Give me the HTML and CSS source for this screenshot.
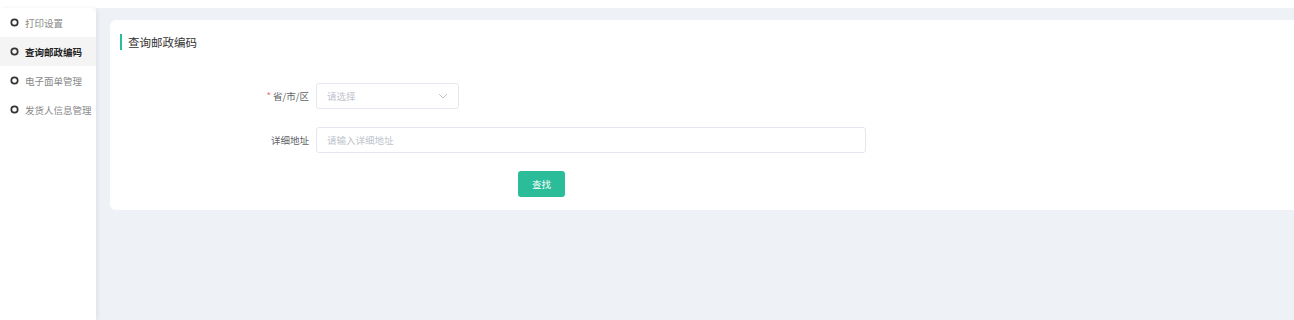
FILE: index.html
```html
<!DOCTYPE html>
<html lang="zh-CN">
<head>
    <meta charset="UTF-8">
    <title>查询邮政编码</title>
    <link rel="stylesheet" href="styles.css">
</head>
<body>
    <div class="topbar"></div>
    <div class="main">
        <ul class="sidebar">
            <li class="menu-item"><svg class="dot" width="9" height="9" viewBox="0 0 9 9"><circle cx="4.5" cy="4.5" r="3.2" fill="none" stroke="#333" stroke-width="1.7"/></svg>打印设置</li>
            <li class="menu-item active"><svg class="dot" width="9" height="9" viewBox="0 0 9 9"><circle cx="4.5" cy="4.5" r="3.2" fill="none" stroke="#333" stroke-width="1.7"/></svg>查询邮政编码</li>
            <li class="menu-item"><svg class="dot" width="9" height="9" viewBox="0 0 9 9"><circle cx="4.5" cy="4.5" r="3.2" fill="none" stroke="#333" stroke-width="1.7"/></svg>电子面单管理</li>
            <li class="menu-item"><svg class="dot" width="9" height="9" viewBox="0 0 9 9"><circle cx="4.5" cy="4.5" r="3.2" fill="none" stroke="#333" stroke-width="1.7"/></svg>发货人信息管理</li>
        </ul>
        <div class="content">
            <div class="card">
                <h2 class="card-title">查询邮政编码</h2>
                <form class="form">
                    <div class="form-row">
                        <label class="form-label"><span class="required">*</span>省/市/区</label>
                        <div class="select">
                            <span class="placeholder">请选择</span>
                            <svg class="arrow" width="10" height="6" viewBox="0 0 10 6"><path d="M1 1l4 4 4-4" fill="none" stroke="#c0c4cc" stroke-width="1"/></svg>
                        </div>
                    </div>
                    <div class="form-row">
                        <label class="form-label">详细地址</label>
                        <input class="input" type="text" placeholder="请输入详细地址">
                    </div>
                    <div class="form-row">
                        <span class="form-label"></span>
                        <button type="button" class="btn">查找</button>
                    </div>
                </form>
            </div>
        </div>
    </div>
</body>
</html>
```
FILE: styles.css
```css
body {
    margin: 0;
    font-family: "Noto Sans CJK SC", "Noto Sans", sans-serif;
    background: #fff;
    overflow: hidden;
}

.topbar {
    height: 8px;
    background: #fff;
}

.main {
    display: flex;
    height: 312px;
}

.sidebar {
    width: 96px;
    margin: 0;
    padding: 0;
    list-style: none;
    background: #fff;
    border-top-right-radius: 6px;
    box-shadow: 2px 0 4px rgba(0, 0, 0, 0.06);
    position: relative;
    z-index: 1;
}

.menu-item {
    display: flex;
    align-items: center;
    height: 29px;
    padding-left: 10px;
    font-size: 9.5px;
    color: #888;
}

.menu-item.active {
    background: #f4f4f5;
    color: #222;
    font-weight: bold;
}

.dot {
    margin-right: 6px;
}

.content {
    flex: 1;
    background: #eef1f5;
    padding: 12px 0 0 14px;
}

.card {
    background: #fff;
    height: 190px;
    border-radius: 6px 0 0 6px;
    padding: 14px 0 0 10px;
    box-sizing: border-box;
}

.card-title {
    margin: 0;
    border-left: 2px solid #2bbd9a;
    padding-left: 6px;
    height: 16px;
    line-height: 16px;
    font-size: 11.5px;
    font-weight: normal;
    color: #333;
}

.form {
    margin-top: 33px;
}

.form-row {
    display: flex;
    align-items: center;
    margin-bottom: 18px;
}

.form-label {
    width: 189px;
    padding-right: 7px;
    text-align: right;
    font-size: 9.5px;
    color: #606266;
}

.required {
    color: #f56c6c;
    margin-right: 2px;
}

.select {
    width: 143px;
    height: 26px;
    box-sizing: border-box;
    border: 1px solid #e4e7ed;
    border-radius: 3px;
    display: flex;
    align-items: center;
    justify-content: space-between;
    padding: 0 10px;
}

.placeholder {
    font-size: 9.5px;
    color: #c0c4cc;
}

.input {
    width: 550px;
    height: 26px;
    box-sizing: border-box;
    border: 1px solid #e4e7ed;
    border-radius: 3px;
    padding: 0 10px;
    font-family: inherit;
    font-size: 9.5px;
    outline: none;
}

.input::placeholder {
    color: #c0c4cc;
}

.btn {
    margin-left: 202px;
    width: 47px;
    height: 26px;
    border: none;
    border-radius: 3px;
    background: #2bbd9a;
    color: #fff;
    font-family: inherit;
    font-size: 9.5px;
    cursor: pointer;
}
```
